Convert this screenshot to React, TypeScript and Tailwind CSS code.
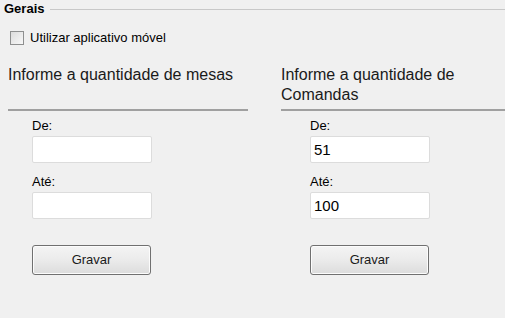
const font = { fontFamily: '"Liberation Sans", Arial, sans-serif' };

function Field({ label, value }: { label: string; value: string }) {
  return (
    <div className="flex flex-col">
      <label className="text-[13px] leading-[14px] text-black">{label}</label>
      <input
        readOnly
        value={value}
        className="mt-[3px] h-[27px] w-[120px] rounded-[2px] border border-[#dcdcdc] bg-white px-[3px] text-[15px] text-black outline-none"
      />
    </div>
  );
}

function Column({
  title,
  from,
  to,
  width,
  indent,
}: {
  title: string;
  from: string;
  to: string;
  width: string;
  indent: string;
}) {
  return (
    <div className={`flex flex-col ${width}`}>
      <div className="flex h-[46px] items-start border-b-2 border-[#a0a0a0] text-[16px] leading-[20px] text-[#1a1a1a]">
        {title}
      </div>
      <div className={`${indent} mt-[8px] flex flex-col gap-[12px]`}>
        <Field label="De:" value={from} />
        <Field label="Até:" value={to} />
      </div>
      <button
        className={`${indent} mt-[26px] h-[30px] w-[119px] rounded-[3px] border border-[#707070] bg-gradient-to-b from-[#f4f4f4] via-[#ebebeb] to-[#dcdcdc] text-[13px] text-[#1a1a1a] shadow-[inset_0_0_0_1px_#fcfcfc]`}
      >
        Gravar
      </button>
    </div>
  );
}

export default function App() {
  return (
    <div className="h-[318px] w-[505px] overflow-hidden bg-[#f0f0f0]" style={font}>
      <div className="flex items-center pl-[4px] pt-[2px]">
        <span className="text-[13px] font-bold leading-[14px] text-black">Gerais</span>
        <div className="ml-[6px] h-px flex-1 bg-[#c8c8c8]" />
      </div>
      <label className="ml-[10px] mt-[15px] flex items-center gap-[6px]">
        <span className="h-[14px] w-[14px] border border-[#8e8f8f] bg-gradient-to-br from-[#dcdcdc] to-[#f8f8f8]" />
        <span className="text-[13px] leading-[14px] text-black">Utilizar aplicativo móvel</span>
      </label>
      <div className="ml-[8px] mt-[20px] flex gap-[33px]">
        <Column title="Informe a quantidade de mesas" from="" to="" width="w-[240px]" indent="ml-[24px]" />
        <Column title="Informe a quantidade de Comandas" from="51" to="100" width="w-[224px]" indent="ml-[29px]" />
      </div>
    </div>
  );
}
